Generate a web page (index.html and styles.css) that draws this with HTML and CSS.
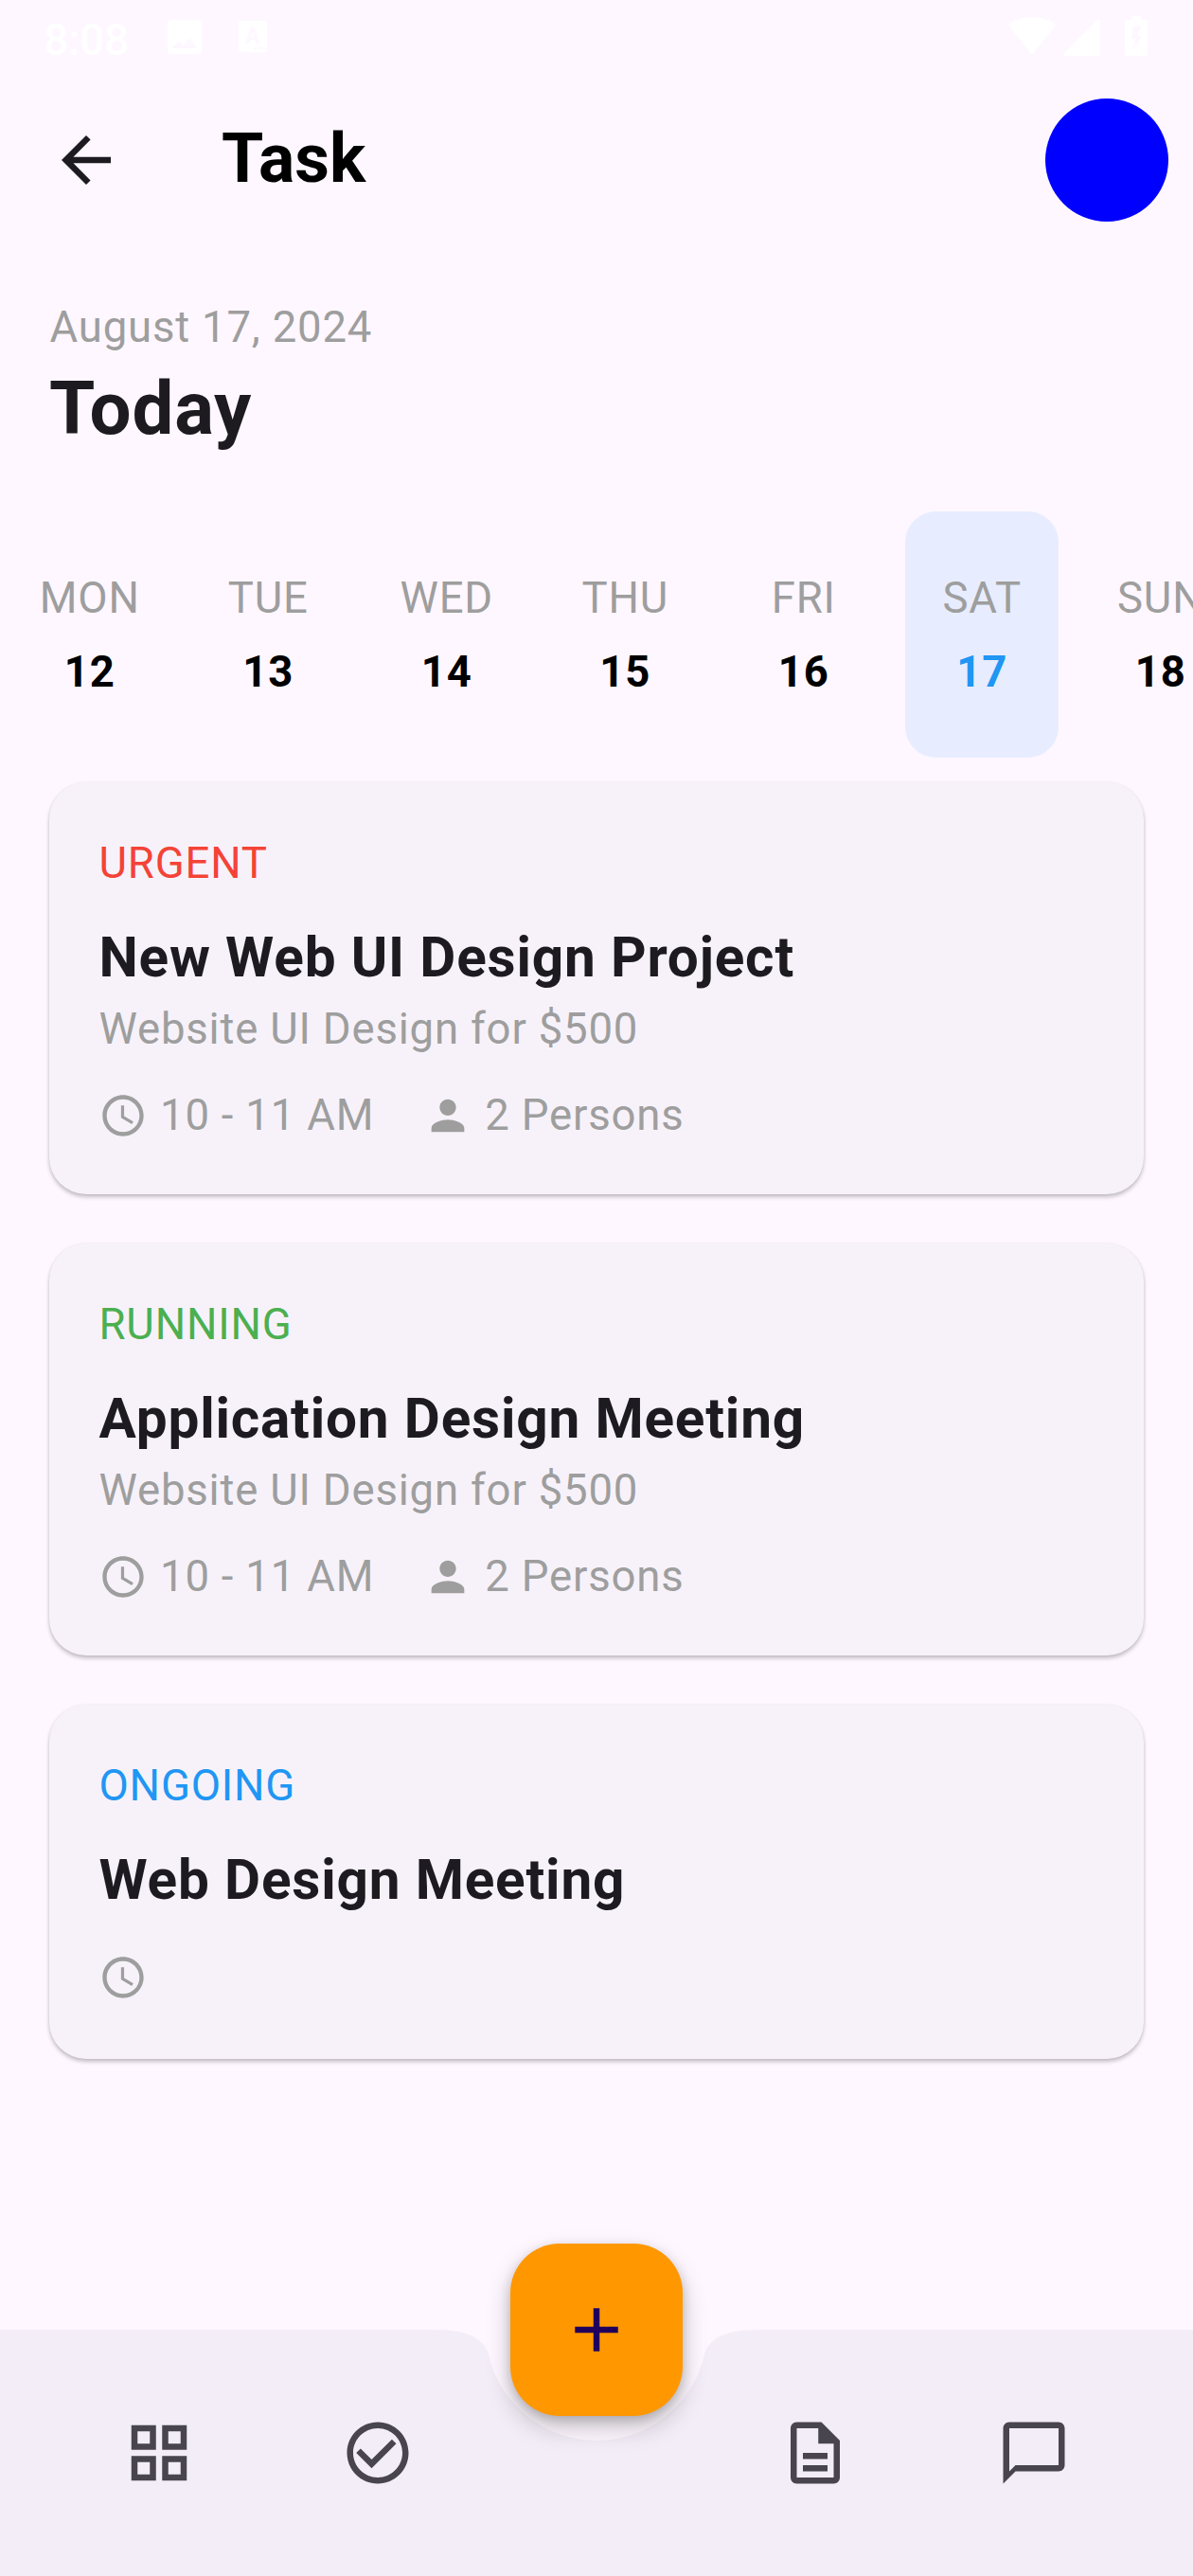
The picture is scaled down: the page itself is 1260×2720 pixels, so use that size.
FILE: index.html
```html
<!DOCTYPE html>
<html lang="en">
<head>
<meta charset="utf-8">
<title>Task</title>
<link rel="stylesheet" href="styles.css">
</head>
<body>
<svg class="defs" width="0" height="0" aria-hidden="true">
  <symbol id="clock" viewBox="0 0 24 24"><path d="M11.99 2C6.47 2 2 6.48 2 12s4.47 10 9.99 10C17.52 22 22 17.52 22 12S17.52 2 11.99 2zM12 20c-4.42 0-8-3.58-8-8s3.58-8 8-8 8 3.58 8 8-3.58 8-8 8zm.5-13H11v6l5.25 3.15.75-1.23-4.5-2.67z"/></symbol>
  <symbol id="person" viewBox="0 0 24 24"><path d="M12 12c2.21 0 4-1.79 4-4s-1.79-4-4-4-4 1.79-4 4 1.79 4 4 4zm0 2c-2.67 0-8 1.34-8 4v2h16v-2c0-2.66-5.33-4-8-4z"/></symbol>
</svg>
<div class="screen">
  <div class="status">
    <span class="status-time">8:08</span>
    <svg class="status-image" width="36" height="36" viewBox="0 0 36 36"><path fill-rule="evenodd" d="M4 0h28a4 4 0 0 1 4 4v28a4 4 0 0 1-4 4H4a4 4 0 0 1-4-4V4a4 4 0 0 1 4-4zM5 30h26l-8-11-6.500 8-5-5z"/></svg>
    <svg class="status-lang" width="30" height="33" viewBox="0 0 30 33"><rect width="30" height="33" rx="3"/><text x="7" y="24">A</text><path class="cut" d="M16 28h3v2h-3zM20.500 28h3v2h-3zM25 28h3v2h-3z"/></svg>
    <div class="status-right">
      <svg class="wifi" width="50" height="42" viewBox="0 0 50 42"><path d="M25 41 .5 10Q0 8.500 1.500 7.500Q12 1 25 1t23.500 6.500q1.500 1 1 2.500z"/></svg>
      <svg class="signal" width="39" height="42" viewBox="0 0 39 42"><path d="M39 6v34q0 2-2 2H2q-3-1-1-3L35 5q4-2 4 1z"/></svg>
      <svg class="battery" width="24" height="42" viewBox="0 0 24 42"><path fill-rule="evenodd" d="M7 0h10v4h5q2 0 2 2v34q0 2-2 2H2q-2 0-2-2V6q0-2 2-2h5zM9 11 7 24h4L8 36l10-15h-5l4-10z"/></svg>
    </div>
  </div>
  <header class="appbar">
    <svg class="back" width="78" height="78" viewBox="0 0 24 24"><path d="M20 11H7.830l5.590-5.590L12 4l-8 8 8 8 1.410-1.410L7.830 13H20v-2z"/></svg>
    <h1 class="appbar-title">Task</h1>
    <div class="avatar"></div>
  </header>
  <section class="heading">
    <div class="muted">August 17, 2024</div>
    <h2 class="today">Today</h2>
  </section>
  <div class="days">
    <div class="day"><span class="muted">MON</span><b>12</b></div>
    <div class="day"><span class="muted">TUE</span><b>13</b></div>
    <div class="day"><span class="muted">WED</span><b>14</b></div>
    <div class="day"><span class="muted">THU</span><b>15</b></div>
    <div class="day"><span class="muted">FRI</span><b>16</b></div>
    <div class="day selected"><span class="muted">SAT</span><b>17</b></div>
    <div class="day"><span class="muted">SUN</span><b>18</b></div>
  </div>
  <main class="tasks">
    <article class="card">
      <div class="urgent">URGENT</div>
      <h3 class="card-title">New Web UI Design Project</h3>
      <div class="muted">Website UI Design for $500</div>
      <div class="meta"><svg class="icon"><use href="#clock"/></svg><span>10 - 11 AM</span><svg class="icon people"><use href="#person"/></svg><span>2 Persons</span></div>
    </article>
    <article class="card">
      <div class="running">RUNNING</div>
      <h3 class="card-title">Application Design Meeting</h3>
      <div class="muted">Website UI Design for $500</div>
      <div class="meta"><svg class="icon"><use href="#clock"/></svg><span>10 - 11 AM</span><svg class="icon people"><use href="#person"/></svg><span>2 Persons</span></div>
    </article>
    <article class="card">
      <div class="ongoing">ONGOING</div>
      <h3 class="card-title">Web Design Meeting</h3>
      <div class="meta meta-only"><svg class="icon"><use href="#clock"/></svg></div>
    </article>
  </main>
  <nav class="bottom">
    <svg class="bar" width="1260" height="260" viewBox="0 0 1260 260"><path d="M0 0H461Q509.750 0 516.160 27.020A117 117 0 0 0 743.840 27.020Q750.250 0 799 0H1260V260H0z"/></svg>
    <div class="tabs">
      <svg class="tab" viewBox="0 0 24 24"><path fill-rule="evenodd" d="M3 3v8h8V3H3zm6 6H5V5h4v4zm-6 4v8h8v-8H3zm6 6H5v-4h4v4zm4-16v8h8V3h-8zm6 6h-4V5h4v4zm-6 4v8h8v-8h-8zm6 6h-4v-4h4v4z"/></svg>
      <svg class="tab" viewBox="0 0 24 24"><path fill-rule="evenodd" d="M12 2C6.480 2 2 6.480 2 12s4.480 10 10 10 10-4.480 10-10S17.520 2 12 2zm0 18c-4.410 0-8-3.590-8-8s3.590-8 8-8 8 3.590 8 8-3.590 8-8 8z"/><path d="M16.590 7.580 10 14.170l-3.590-3.580L5 12l5 5 8-8z"/></svg>
      <span></span>
      <svg class="tab" viewBox="0 0 24 24"><path d="M8 16h8v2H8zm0-4h8v2H8zm6-10H6c-1.100 0-2 .9-2 2v16c0 1.100.89 2 1.990 2H18c1.100 0 2-.9 2-2V8l-6-6zm4 18H6V4h7v5h5v11z"/></svg>
      <svg class="tab" viewBox="0 0 24 24"><path d="M20 2H4c-1.100 0-2 .9-2 2v18l4-4h14c1.100 0 2-.9 2-2V4c0-1.100-.9-2-2-2zm0 14H6l-2 2V4h16v12z"/></svg>
    </div>
    <div class="fab"><svg width="78" height="78" viewBox="0 0 24 24"><path d="M19 13h-6v6h-2v-6H5v-2h6V5h2v6h6v2z"/></svg></div>
  </nav>
</div>
</body>
</html>
```
FILE: styles.css
```css
* { box-sizing: border-box; }

body {
  margin: 0;
  background: #fef7ff;
  color: #1d1b20;
  font: 400 45.5px/65px Roboto, sans-serif;
  letter-spacing: .8125px;
  text-indent: .5px;
}

svg { display: block; flex: none; }
h1, h2, h3 { margin: 0; font-weight: 700; }
.defs { position: absolute; }

.screen {
  display: flex;
  flex-direction: column;
  width: 1260px;
  height: 2720px;
  overflow: hidden;
}

/* Status bar */
.status {
  display: flex;
  align-items: flex-start;
  height: 78px;
  padding: 0 48px 0 46px;
  color: #fff;
  fill: #fff;
}
.status-time { width: 131px; padding-top: 10px; font-weight: 500; letter-spacing: 0; }
.status-image { margin-top: 21px; }
.status-lang { margin: 22px 0 0 39px; }
.status-lang text { fill: #fef7ff; font-size: 23px; font-weight: 700; letter-spacing: 0; }
.status-lang .cut { fill: #fef7ff; }
.status-right { display: flex; margin: 17px 0 0 auto; }
.signal { margin-left: 8px; }
.battery { margin-left: 26px; }

/* App bar */
.appbar {
  display: flex;
  align-items: center;
  height: 182px;
  padding: 0 26px 0 52px;
}
.back { fill: #1d1b20; }
.appbar-title {
  margin-left: 104px;
  padding-bottom: 3px;
  color: #000;
  font-size: 71.5px;
  line-height: 91px;
  letter-spacing: 0;
  text-indent: 0;
}
.avatar {
  width: 130px;
  height: 130px;
  margin-left: auto;
  border-radius: 50%;
  background: #00f;
}

.heading { height: 280px; padding: 53px 52px 0; }
.muted, .meta { color: #9e9e9e; }
.today { font-size: 78px; line-height: 108px; text-indent: 0; }

/* Week strip */
.days { display: flex; gap: 26px; height: 260px; padding-left: 13px; }
.day {
  display: flex;
  flex: none;
  flex-direction: column;
  align-items: center;
  justify-content: center;
  gap: 13px;
  width: 162.5px;
  border-radius: 32.5px;
  text-indent: 1px;
}
.day b { color: #000; }
.selected { background: #e7edff; }
.selected b { color: #2196f3; }

/* Task cards */
.tasks {
  display: flex;
  flex: 1;
  flex-direction: column;
  gap: 52px;
  padding: 26px 52px 0;
}
.card {
  padding: 53px 52px 51px;
  border-radius: 39px;
  background: #f7f2fa;
  box-shadow: 0 3px 4px rgba(0, 0, 0, .23), 0 0 3px rgba(0, 0, 0, .06);
}
.urgent { color: #f44336; }
.running { color: #4caf50; }
.ongoing { color: #2196f3; }
.card-title { margin: 25px 0 1px; font-size: 58.5px; line-height: 84px; }
.meta { display: flex; align-items: center; gap: 13px; height: 65px; margin-top: 26px; text-indent: 0; }
.meta-only { margin: 28px 0 3px; }
.icon { width: 52px; height: 52px; fill: #9e9e9e; }
.people { margin-left: 39px; }

/* Bottom navigation with a docked action button */
.bottom { position: relative; height: 260px; }
.bar { position: absolute; inset: 0; fill: #f3edf7; }
.tabs {
  position: relative;
  display: grid;
  grid-template-columns: repeat(5, 1fr);
  place-items: center;
  height: 260px;
  padding: 0 52px;
}
.tab { width: 78px; height: 78px; fill: #49454f; }
.fab {
  position: absolute;
  top: -91px;
  left: 539px;
  display: grid;
  place-items: center;
  width: 182px;
  height: 182px;
  border-radius: 52px;
  background: #ff9800;
  box-shadow: 0 12px 26px rgba(0, 0, 0, .22), 0 4px 12px rgba(0, 0, 0, .16);
}
.fab svg { fill: #21005d; }
```
